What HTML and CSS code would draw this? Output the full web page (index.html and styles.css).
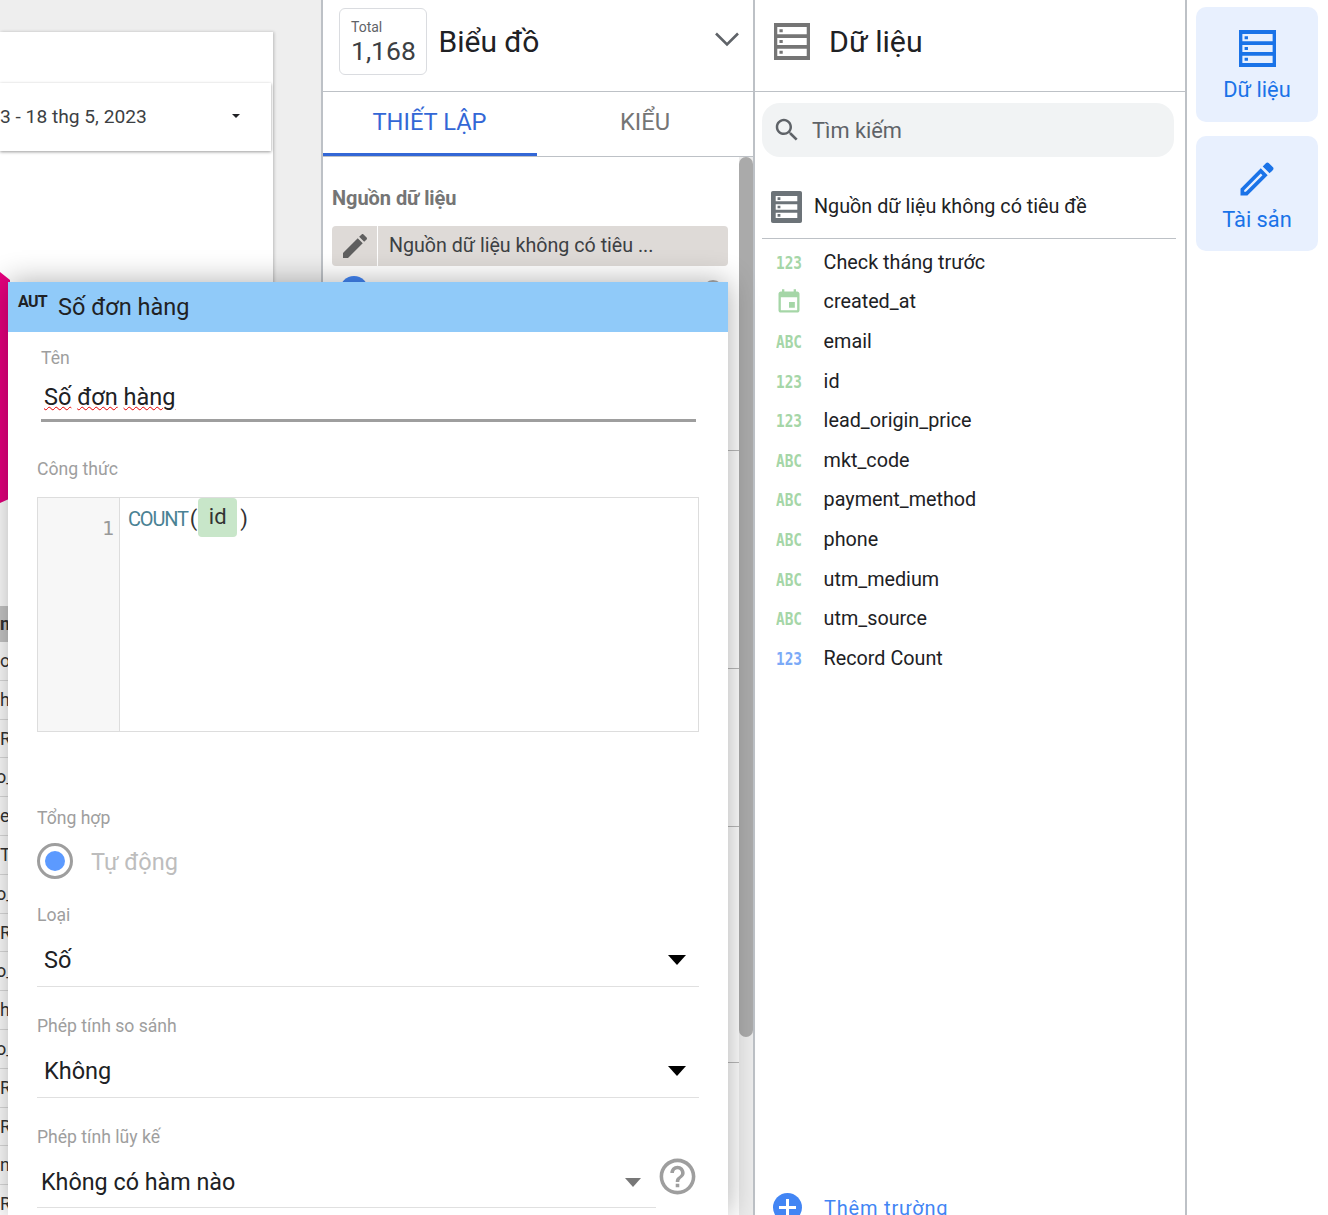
FILE: index.html
```html
<!DOCTYPE html>
<html lang="vi">
<head>
<meta charset="utf-8">
<title>Dữ liệu</title>
<link rel="stylesheet" href="styles.css">
</head>
<body>
<svg class="defs" width="0" height="0" aria-hidden="true">
  <symbol id="db" viewBox="0 0 33 36" preserveAspectRatio="none">
    <path fill-rule="evenodd" d="M0 0h33v36H0zM3 4v7h27V4zM3 14.500v7h27v-7zM3 25v7h27v-7z"/>
    <path d="M5 6h3v3H5zM5 16.500h3v3H5zM5 27h3v3H5z"/>
  </symbol>
  <symbol id="db-solid" viewBox="0 0 33 36" preserveAspectRatio="none">
    <path fill-rule="evenodd" d="M2 0h29a2 2 0 0 1 2 2v32a2 2 0 0 1-2 2H2a2 2 0 0 1-2-2V2a2 2 0 0 1 2-2zM5 5.500v6h23v-6zM5 15v6h23v-6zM5 24.500v6h23v-6z"/>
    <path d="M7 7h3v3H7zM7 16.500h3v3H7zM7 26h3v3H7z"/>
  </symbol>
  <symbol id="pencil" viewBox="0 0 24 24">
    <path d="M3 17.250V21h3.750L17.810 9.940l-3.750-3.750L3 17.250zM20.710 7.040c.39-.39.39-1.020 0-1.410l-2.340-2.340c-.39-.39-1.020-.39-1.410 0l-1.830 1.830 3.750 3.750 1.830-1.830z"/>
  </symbol>
</svg>
<div class="app">
  <section class="canvas">
    <div class="card">
      <div class="date-control">
        <span class="date-text">3 - 18 thg 5, 2023</span>
        <span class="date-arrow"></span>
      </div>
      <div class="pink"></div>
      <div class="under-table">
        <div class="under-row head">n</div>
        <div class="under-row">o</div>
        <div class="under-row">h</div>
        <div class="under-row">R</div>
        <div class="under-row shift">o_</div>
        <div class="under-row">e</div>
        <div class="under-row">T</div>
        <div class="under-row shift">o_</div>
        <div class="under-row">R</div>
        <div class="under-row shift">o_</div>
        <div class="under-row">h</div>
        <div class="under-row shift">o_</div>
        <div class="under-row">R</div>
        <div class="under-row">R</div>
        <div class="under-row">n</div>
        <div class="under-row">R</div>
      </div>
    </div>
  </section>

  <section class="chart-panel">
    <header class="chart-head">
      <div class="score">
        <div class="score-label">Total</div>
        <div class="score-value">1,168</div>
      </div>
      <div class="panel-title chart-title">Biểu đồ</div>
      <svg class="chevron" viewBox="0 0 24 16"><path d="M1 1.500l11 11 11-11" fill="none" stroke="#5f6368" stroke-width="2.600"/></svg>
    </header>
    <nav class="tabs">
      <div class="tab active">THIẾT LẬP</div>
      <div class="tab">KIỂU</div>
    </nav>
    <div class="chart-body">
      <div class="chart-content">
        <div class="section-title">Nguồn dữ liệu</div>
        <div class="source-chip">
          <span class="chip-icon"><svg class="chip-pencil"><use href="#pencil"/></svg></span>
          <span class="chip-text">Nguồn dữ liệu không có tiêu ...</span>
        </div>
        <div class="blend-row">
          <span class="blend-dot"></span>
          <span class="blend-info"></span>
        </div>
        <div class="hidden-sep sep-a"></div>
        <div class="hidden-sep sep-b"></div>
        <div class="hidden-sep sep-c"></div>
        <div class="hidden-sep sep-d"></div>
      </div>
      <div class="scroll-track"><div class="scroll-thumb"></div></div>
    </div>
  </section>

  <section class="data-panel">
    <header class="data-head">
      <svg class="data-icon"><use href="#db"/></svg>
      <div class="panel-title">Dữ liệu</div>
    </header>
    <div class="search">
      <svg class="search-icon" viewBox="0 0 24 24"><path d="M15.500 14h-.79l-.28-.27C15.410 12.590 16 11.110 16 9.500 16 5.910 13.090 3 9.500 3S3 5.910 3 9.500 5.910 16 9.500 16c1.610 0 3.090-.59 4.230-1.570l.27.28v.79l5 4.990L20.490 19l-4.990-5zm-6 0C7.010 14 5 11.990 5 9.500S7.010 5 9.500 5 14 7.010 14 9.500 11.990 14 9.500 14z"/></svg>
      <span>Tìm kiếm</span>
    </div>
    <div class="source-row">
      <svg class="source-icon"><use href="#db-solid"/></svg>
      <span>Nguồn dữ liệu không có tiêu đề</span>
    </div>
    <ul class="fields">
      <li class="field"><span class="type">123</span><span>Check tháng trước</span></li>
      <li class="field"><span class="type-cal"><svg class="cal" viewBox="0 0 24 24"><path d="M17 12h-5v5h5v-5zM16 1v2H8V1H6v2H5c-1.110 0-1.990.9-1.990 2L3 19c0 1.100.89 2 2 2h14c1.100 0 2-.9 2-2V5c0-1.100-.9-2-2-2h-1V1h-2zm3 18H5V8h14v11z"/></svg></span><span>created_at</span></li>
      <li class="field"><span class="type">ABC</span><span>email</span></li>
      <li class="field"><span class="type">123</span><span>id</span></li>
      <li class="field"><span class="type">123</span><span>lead_origin_price</span></li>
      <li class="field"><span class="type">ABC</span><span>mkt_code</span></li>
      <li class="field"><span class="type">ABC</span><span>payment_method</span></li>
      <li class="field"><span class="type">ABC</span><span>phone</span></li>
      <li class="field"><span class="type">ABC</span><span>utm_medium</span></li>
      <li class="field"><span class="type">ABC</span><span>utm_source</span></li>
      <li class="field"><span class="type metric">123</span><span>Record Count</span></li>
    </ul>
    <div class="add-field">
      <span class="add-circle"></span>
      <span>Thêm trường</span>
    </div>
  </section>

  <aside class="rail">
    <div class="rail-btn">
      <svg class="rail-db"><use href="#db"/></svg>
      <span>Dữ liệu</span>
    </div>
    <div class="rail-btn">
      <svg class="rail-pencil" viewBox="0 0 24 24"><path d="M14.060 9.020l.92.92L5.920 19H5v-.92l9.060-9.060M17.660 3c-.25 0-.51.1-.7.29l-1.830 1.830 3.750 3.750 1.830-1.830c.39-.39.39-1.020 0-1.410l-2.340-2.340c-.2-.2-.45-.29-.71-.29zm-3.600 3.190L3 17.250V21h3.750L17.810 9.940l-3.750-3.750z"/></svg>
      <span>Tài sản</span>
    </div>
  </aside>

  <div class="dialog">
    <div class="dialog-head">
      <span class="aut">AUT</span>
      <span class="dialog-title">Số đơn hàng</span>
    </div>
    <div class="dialog-body">
      <div class="label name-label">Tên</div>
      <div class="name-input"><span class="squiggle">Số</span> <span class="squiggle">đơn</span> <span class="squiggle">hàng</span></div>
      <div class="label formula-label">Công thức</div>
      <div class="editor">
        <div class="gutter">1</div>
        <div class="code">
          <span class="fn">COUNT</span><span class="paren">(</span><span class="token">id</span><span class="paren">)</span>
        </div>
      </div>
      <div class="label agg-label">Tổng hợp</div>
      <div class="radio-row">
        <span class="radio"><span class="radio-dot"></span></span>
        <span class="radio-text">Tự động</span>
      </div>
      <div class="label type-label">Loại</div>
      <div class="select">
        <span>Số</span>
        <span class="select-arrow"></span>
      </div>
      <div class="label cmp-label">Phép tính so sánh</div>
      <div class="select">
        <span>Không</span>
        <span class="select-arrow"></span>
      </div>
      <div class="label last-label">Phép tính lũy kế</div>
      <div class="select-row">
        <div class="select select-last">
          <span>Không có hàm nào</span>
          <span class="select-arrow small"></span>
        </div>
        <svg class="help" viewBox="0 0 24 24"><path d="M11 18h2v-2h-2v2zm1-16C6.480 2 2 6.480 2 12s4.480 10 10 10 10-4.480 10-10S17.520 2 12 2zm0 18c-4.410 0-8-3.590-8-8s3.590-8 8-8 8 3.590 8 8-3.590 8-8 8zm0-14c-2.210 0-4 1.790-4 4h2c0-1.100.9-2 2-2s2 .9 2 2c0 2-3 1.750-3 5h2c0-2.250 3-2.500 3-5 0-2.210-1.790-4-4-4z"/></svg>
      </div>
    </div>
  </div>
</div>
</body>
</html>
```
FILE: styles.css
```css
* { box-sizing: border-box; }
html, body { margin: 0; padding: 0; height: 100%; overflow: hidden; }
body { font-family: Roboto, "Noto Sans", sans-serif; color: #202124; background: #fff; }
.defs { position: absolute; }
.app { position: relative; display: flex; width: 1328px; height: 1215px; overflow: hidden; }

/* report canvas */
.canvas { flex: 0 0 323px; background: #eeeeee; border-right: 2px solid #bdc1c6; padding-top: 32px; }
.card { position: relative; width: 273px; height: 1183px; background: #fff; box-shadow: 1px 0 3px rgba(0,0,0,.22); }
.date-control { position: absolute; left: 0; top: 51px; width: 271px; height: 68px; display: flex; align-items: center; justify-content: space-between; padding: 0 31px 2px 0; background: #fff; box-shadow: 0 1px 3px rgba(0,0,0,.4); font-size: 19.200px; color: #3c4043; }
.date-arrow { width: 0; height: 0; border-left: 4px solid transparent; border-right: 4px solid transparent; border-top: 4px solid #202124; }
.pink { position: absolute; left: 0; top: 240px; width: 10px; height: 231px; background: #e6007e; clip-path: polygon(0 0, 100% 3.500%, 100% 98%, 0 100%); }
.under-table { position: absolute; left: 0; top: 574px; width: 8px; overflow: hidden; }
.under-row { height: 38.800px; line-height: 38px; font-size: 18px; border-bottom: 1px solid #ddd; color: #333; white-space: nowrap; background: #fff; }
.under-row.head { height: 36px; line-height: 36px; background: #c8c8c8; font-weight: 700; border: 0; }
.under-row.shift { text-indent: -4px; }

/* chart panel */
.chart-panel { flex: 0 0 432px; display: flex; flex-direction: column; border-right: 2px solid #bdc1c6; background: #fff; }
.chart-head { height: 92px; flex: none; display: flex; align-items: flex-start; padding: 8px 14px 0 16px; border-bottom: 1px solid #bdc1c6; }
.score { width: 88px; height: 67px; border: 1px solid #dadce0; border-radius: 6px; padding: 11px 11px 0; }
.score-label { font-size: 14px; line-height: 15px; color: #5f6368; }
.score-value { font-size: 26.500px; line-height: 31px; color: #3c4043; }
.panel-title { font-size: 30px; line-height: 38px; color: #202124; }
.chart-title { margin-left: 11.500px; margin-top: 15px; flex: 1; }
.chevron { width: 24px; height: 16px; margin-top: 24px; }
.tabs { height: 65px; flex: none; display: flex; border-bottom: 1px solid #bdc1c6; }
.tab { width: 214px; height: 64px; display: flex; align-items: center; justify-content: center; font-size: 23.700px; color: #757575; padding: 0 0 4px; }
.tab.active { color: #3367d6; border-bottom: 3px solid #3367d6; padding: 0 1px 1px 0; }
.tab + .tab { width: 216px; }
.chart-body { flex: 1; display: flex; min-height: 0; }
.chart-content { position: relative; flex: 1; padding: 29px 0 0 9px; }
.section-title { font-size: 20px; line-height: 24px; font-weight: 700; color: #757575; letter-spacing: -.05px; }
.source-chip { margin-top: 16px; width: 396px; height: 40px; display: flex; background: #dedad7; border-radius: 4px; }
.chip-icon { width: 46px; display: flex; align-items: center; justify-content: center; border-right: 1px solid #fff; }
.chip-pencil { width: 32px; height: 32px; fill: #5f5f5f; }
.chip-text { padding-left: 11px; font-size: 19.650px; line-height: 39px; color: #3c4043; }
.blend-row { display: flex; justify-content: space-between; align-items: flex-start; width: 396px; margin-top: 10px; padding: 0 5px 0 8px; }
.blend-dot { width: 28px; height: 28px; border-radius: 50%; background: #4285f4; }
.blend-info { width: 20px; height: 20px; margin-top: 4px; border-radius: 50%; background: #a8a8a8; }
.hidden-sep { position: absolute; left: 405px; width: 11px; height: 1px; background: #bbb; }
.sep-a { top: 293px; }
.sep-b { top: 511px; }
.sep-c { top: 669px; }
.sep-d { top: 905px; }
.scroll-track { flex: 0 0 14px; background: #ececec; }
.scroll-thumb { width: 14px; height: 880px; border-radius: 7px; background: #aaaaaa; }

/* data panel */
.data-panel { position: relative; flex: 0 0 432px; border-right: 2px solid #bdc1c6; background: #fff; }
.data-head { height: 92px; display: flex; align-items: flex-start; padding: 23px 0 0 19px; border-bottom: 1px solid #bdc1c6; }
.data-icon { width: 36px; height: 37px; fill: #757575; }
.data-head .panel-title { margin-left: 19px; font-size: 30.300px; }
.search { margin: 11px 11px 0 7px; height: 54px; background: #f1f3f4; border-radius: 18px; display: flex; align-items: center; padding-left: 10px; font-size: 21.800px; color: #5f6368; }
.search-icon { width: 30px; height: 30px; fill: #5f6368; margin-right: 10px; }
.source-row { margin: 33px 9px 0 7px; height: 49px; padding: 1px 0 16px 9px; display: flex; align-items: center; border-bottom: 1px solid #bdc1c6; font-size: 19.750px; color: #202124; }
.source-icon { width: 31px; height: 32px; fill: #6c7378; margin-right: 12px; }
.fields { list-style: none; margin: 3.300px 0 0; padding: 0 0 0 21px; }
.field { display: flex; align-items: center; height: 39.650px; font-size: 19.750px; color: #202124; }
.type { flex: 0 0 48px; font-family: "DejaVu Sans Mono", monospace; font-weight: 700; font-size: 18px; color: #a5d6a7; transform: scaleX(.8); transform-origin: left center; }
.type.metric { color: #7baaf7; }
.type-cal { flex: 0 0 48px; display: flex; align-items: center; }
.field > span:last-child { margin-left: -.4px; }
.cal { width: 28px; height: 28px; margin-left: -1px; fill: #a5d6a7; }
.add-field { position: absolute; left: 18px; top: 1193px; display: flex; align-items: center; font-size: 20px; color: #4285f4; letter-spacing: .8px; gap: 22px; }
.add-circle { position: relative; width: 29px; height: 29px; border-radius: 50%; background: #4285f4; }
.add-circle::before { content: ""; position: absolute; left: 6px; top: 13px; width: 17px; height: 3px; background: #fff; }
.add-circle::after { content: ""; position: absolute; left: 13px; top: 6px; width: 3px; height: 17px; background: #fff; }

/* rail */
.rail { flex: 1; display: flex; flex-direction: column; gap: 14px; padding: 7px 10px 0 9px; background: #fff; }
.rail-btn { height: 115px; background: #e8f0fe; border-radius: 10px; display: flex; flex-direction: column; align-items: center; padding-top: 23px; font-size: 21.800px; line-height: 30px; color: #1a73e8; }
.rail-db { width: 37px; height: 37px; fill: #1a73e8; margin-bottom: 8px; }
.rail-pencil { width: 44px; height: 44px; fill: #1a73e8; margin-top: -2px; margin-bottom: 4px; }

/* calculated field dialog */
.dialog { position: absolute; left: 8px; top: 282px; width: 720px; height: 933px; background: #fff; box-shadow: 0 0 28px rgba(0,0,0,.32); }
.dialog-head { position: relative; height: 50px; background: #90caf9; display: flex; align-items: center; padding-left: 50px; }
.aut { position: absolute; left: 10px; top: 11px; font-size: 16px; letter-spacing: -.7px; font-weight: 700; color: #202124; line-height: 18px; }
.dialog-title { font-size: 23.500px; color: #202124; }
.dialog-body { padding: 0 29px; }
.label { font-size: 17.600px; line-height: 22px; color: #9e9e9e; }
.name-label { margin-top: 15px; padding-left: 4px; }
.name-input { margin: 12px 3px 0 4px; height: 41px; padding: 1px 0 0 3px; border-bottom: 3px solid #9e9e9e; font-size: 23.500px; line-height: 30px; color: #202124; }
.squiggle { text-decoration: underline wavy #e50000 1.300px; text-underline-offset: 1px; }
.formula-label { margin-top: 36px; }
.editor { margin-top: 17px; width: 662px; height: 235px; border: 1px solid #dddddd; display: flex; }
.gutter { flex: 0 0 82px; background: #f7f7f7; border-right: 1px solid #dddddd; text-align: right; padding: 18px 5px 0 0; font-family: "DejaVu Sans Mono", monospace; font-size: 20px; line-height: 25px; color: #999; }
.code { padding-left: 8px; display: flex; align-items: flex-start; font-size: 20px; line-height: 42px; }
.fn { color: #4a8294; letter-spacing: -1.200px; }
.paren { color: #333; font-size: 22px; margin: 0 1px 0 2px; }
.token { width: 39px; height: 39px; background: #c8e6c9; border-radius: 4px; text-align: center; font-size: 22px; line-height: 38px; color: #333; }
.token + .paren { margin-left: 3px; }
.agg-label { margin-top: 75px; }
.radio-row { display: flex; align-items: center; margin-top: 14px; height: 36px; }
.radio { width: 36px; height: 36px; border: 3px solid #9e9e9e; border-radius: 50%; display: flex; align-items: center; justify-content: center; }
.radio-dot { width: 20px; height: 20px; border-radius: 50%; background: #5c9aff; }
.radio-text { margin-left: 18px; font-size: 23.500px; color: #bdbdbd; padding-top: 2px; }
.type-label { margin-top: 25px; }
.select { width: 662px; height: 52px; margin-top: 9px; padding: 0 13px 2px 7px; display: flex; align-items: center; justify-content: space-between; border-bottom: 1px solid #e0e0e0; font-size: 23.500px; color: #202124; }
.select-arrow { width: 0; height: 0; border-left: 9px solid transparent; border-right: 9px solid transparent; border-top: 10px solid #000; }
.select-arrow.small { border-left-width: 8px; border-right-width: 8px; border-top: 9px solid #777; }
.cmp-label { margin-top: 28px; }
.last-label { margin-top: 28px; }
.select-row { display: flex; align-items: flex-start; }
.select-last { width: 619px; height: 51px; padding: 0 15px 0 4px; margin-top: 9px; font-size: 23.300px; }
.help { width: 43px; height: 43px; fill: #9e9e9e; margin-top: 7px; flex: none; }
```
